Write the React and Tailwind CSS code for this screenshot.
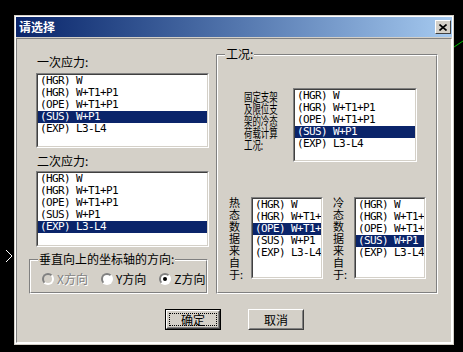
import React from 'react';

const items = ['(HGR) W', '(HGR) W+T1+P1', '(OPE) W+T1+P1', '(SUS) W+P1', '(EXP) L3-L4'];

// 凹陷的列表框
const ListBox = ({ sel, className }) => (
  <div className={`${className} border border-t-[#808080] border-l-[#808080] border-r-white border-b-white`}>
    <div className="h-full border border-t-[#404040] border-l-[#404040] border-r-[#d4d0c8] border-b-[#d4d0c8] bg-white overflow-hidden font-['DejaVu_Sans_Mono',monospace] text-[11px] tracking-[-0.62px]">
      {items.map((t, i) => (
        <div
          key={t}
          className={`h-[12px] leading-[12px] pl-[2px] whitespace-nowrap ${i === sel ? 'bg-[#0a246a] text-white' : 'text-black'}`}
        >
          {t}
        </div>
      ))}
    </div>
  </div>
);

// 蚀刻边框的分组框
const GroupBox = ({ label, className, children }) => (
  <div className={`${className} relative border border-t-[#808080] border-l-[#808080] border-r-white border-b-white`}>
    <div className="h-full border border-t-white border-l-white border-r-[#808080] border-b-[#808080]">
      {children}
    </div>
    <span className="absolute left-[8px] -top-[7px] px-[1px] bg-[#d4d0c8] leading-[12px] whitespace-nowrap">{label}</span>
  </div>
);

const Radio = ({ label, checked, disabled }) => (
  <div className="flex items-center gap-[3px]">
    <div
      className={`w-[12px] h-[12px] rounded-full border-2 border-t-[#808080] border-l-[#808080] border-r-white border-b-white flex items-center justify-center ${disabled ? 'bg-[#d4d0c8]' : 'bg-white'}`}
    >
      {checked && <div className="w-[4px] h-[4px] rounded-full bg-black" />}
    </div>
    <span
      className={`leading-[12px] whitespace-nowrap ${disabled ? 'text-[#808080] [text-shadow:1px_1px_0_#fff]' : ''}`}
    >
      {label}
    </span>
  </div>
);

const VLabel = ({ chars, className }) => (
  <div className={`${className} w-[12px] flex flex-col text-[11px] leading-[12px] whitespace-nowrap`}>
    {chars.map((c) => (
      <span key={c} className="h-[12px]">{c}</span>
    ))}
  </div>
);

export default function App() {
  return (
    <div className="relative w-[463px] h-[352px] overflow-hidden bg-black pl-[14px] pt-[15px] font-['Noto_Sans_CJK_SC','Liberation_Sans',sans-serif] text-[12px] text-black">
      {/* 背景里的 CAD 线条 */}
      <svg className="absolute left-0 top-0" width="463" height="352">
        <line x1="454" y1="47" x2="463" y2="41" stroke="#00c000" strokeWidth="1" />
        <polyline points="6,250 12,256 6,262" fill="none" stroke="#ffffff" strokeWidth="1" />
      </svg>

      {/* 对话框 */}
      <div className="relative w-[440px] h-[330px] bg-[#d4d0c8] border border-[#d4d0c8]">
        <div className="h-full flex flex-col border border-white">
          {/* 标题栏 */}
          <div className="h-[20px] flex items-center justify-between pl-[3px] pr-[1px] bg-gradient-to-r from-[#0a246a] to-[#a6caf0]">
            <span className="text-white font-bold leading-none">请选择</span>
            <div className="w-[16px] h-[14px] bg-[#d4d0c8] border border-t-white border-l-white border-r-[#404040] border-b-[#404040] flex items-center justify-center">
              <svg width="8" height="7" viewBox="0 0 8 7">
                <path d="M0.5 0.5 L7.5 6.5 M7.5 0.5 L0.5 6.5" stroke="#000" strokeWidth="1.6" />
              </svg>
            </div>
          </div>

          {/* 客户区 */}
          <div className="flex-1 mt-[1px] border border-t-[#808080] border-l-[#808080] border-r-white border-b-white">
            <div className="flex items-start pl-[12px] pt-[15px]">
              {/* 左列 */}
              <div className="w-[180px] flex flex-col">
                <div className="mt-[2px] pl-[8px] h-[12px] leading-[12px]">一次应力:</div>
                <ListBox sel={3} className="mt-[5px] ml-[7px] w-[173px] h-[75px]" />
                <div className="mt-[7px] pl-[8px] h-[12px] leading-[12px]">二次应力:</div>
                <ListBox sel={4} className="mt-[4px] ml-[7px] w-[173px] h-[76px]" />
                <GroupBox label="垂直向上的坐标轴的方向:" className="mt-[12px] w-[179px] h-[35px]">
                  <div className="flex items-center pl-[11px] pt-[12px] gap-[13px]">
                    <Radio label="X方向" disabled />
                    <Radio label="Y方向" />
                    <Radio label="Z方向" checked />
                  </div>
                </GroupBox>
              </div>

              {/* 工况 */}
              <GroupBox label="工况:" className="ml-[7px] w-[222px] h-[240px]">
                <div className="flex items-start mt-[32px]">
                  <div className="ml-[26px] w-[49px] mt-[3px]">
                    <div className="origin-top-left scale-x-70 text-[12px] leading-[12px] whitespace-nowrap">
                      <div>固定支架</div>
                      <div>及限位支</div>
                      <div>架的冷态</div>
                      <div>荷载计算</div>
                      <div>工况:</div>
                    </div>
                  </div>
                  <ListBox sel={3} className="w-[124px] h-[74px]" />
                </div>
                <div className="flex items-start mt-[35px] pl-[11px]">
                  <VLabel chars={['热', '态', '数', '据', '来', '自', '于:']} className="-mt-[1px]" />
                  <ListBox sel={2} className="ml-[10px] w-[72px] h-[82px]" />
                  <VLabel chars={['冷', '态', '数', '据', '来', '自', '于:']} className="ml-[10px] -mt-[1px]" />
                  <ListBox sel={3} className="ml-[9px] w-[72px] h-[82px]" />
                </div>
              </GroupBox>
            </div>

            {/* 按钮 */}
            <div className="flex mt-[15px] pl-[148px] gap-[27px]">
              <button className="w-[56px] h-[21px] p-0 border border-black bg-[#d4d0c8]">
                <div className="h-full border border-t-white border-l-white border-r-[#404040] border-b-[#404040]">
                  <div className="h-full border border-t-[#d4d0c8] border-l-[#d4d0c8] border-r-[#808080] border-b-[#808080] p-[1px]">
                    <div className="h-full border border-dotted border-black flex items-center justify-center leading-none">确定</div>
                  </div>
                </div>
              </button>
              <button className="w-[56px] h-[21px] p-0 bg-[#d4d0c8] border border-t-white border-l-white border-r-[#404040] border-b-[#404040]">
                <div className="h-full border border-t-[#d4d0c8] border-l-[#d4d0c8] border-r-[#808080] border-b-[#808080] flex items-center justify-center leading-none">
                  取消
                </div>
              </button>
            </div>
          </div>
        </div>
      </div>
    </div>
  );
}
